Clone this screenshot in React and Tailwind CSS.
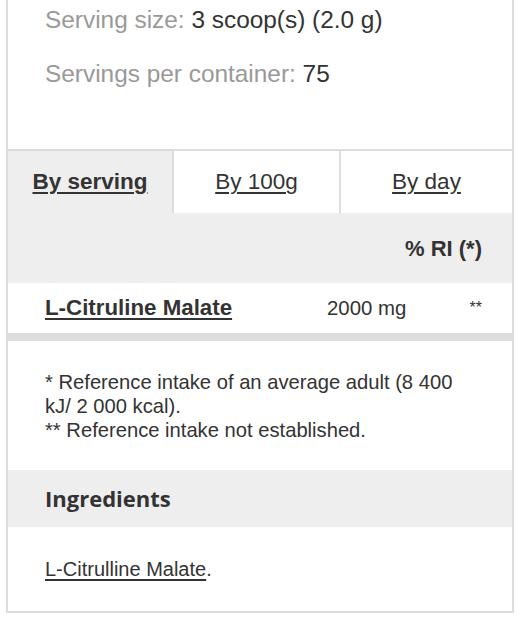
const TABS = [
  { label: "By serving", active: true, width: "w-[166px] border-r-2" },
  { label: "By 100g", active: false, width: "w-[167px] border-r-2" },
  { label: "By day", active: false, width: "flex-1" },
];

export default function App() {
  return (
    <div className="min-h-screen bg-white pl-[6px] font-['Liberation_Sans',Arial,sans-serif] text-[#333]">
      <div className="w-[508px] border-2 border-t-0 border-[#ddd]">
        {/* Serving info */}
        <div className="h-[151px] border-b-2 border-[#ddd] px-[37px] pt-[5px] text-[24.4px] leading-[30px]">
          <p>
            <span className="text-[#999]">Serving size:</span> 3 scoop(s) (2.0 g)
          </p>
          <p className="mt-[24px]">
            <span className="text-[#999]">Servings per container:</span> 75
          </p>
        </div>

        {/* Tabs */}
        <div className="flex h-[62px]">
          {TABS.map((tab) => (
            <div
              key={tab.label}
              className={`${tab.width} flex items-center justify-center border-[#ddd] text-[22.5px] ${
                tab.active ? "bg-[#eee] font-bold" : "bg-white"
              }`}
            >
              <span className="underline underline-offset-[3px]">{tab.label}</span>
            </div>
          ))}
        </div>

        {/* RI header */}
        <div className="flex h-[70px] items-center justify-end bg-[#eee] pr-[30px] text-[22px] font-bold">
          % RI (*)
        </div>

        {/* Row */}
        <div className="flex h-[58px] items-center border-b-8 border-[#ddd] pl-[37px] pr-[30px]">
          <span className="w-[282px] text-[22.3px] font-bold underline decoration-2 underline-offset-[3px]">
            L-Citruline Malate
          </span>
          <span className="flex-1 text-[20.4px]">2000 mg</span>
          <span className="text-[16px]">**</span>
        </div>

        {/* Footnotes */}
        <div className="h-[129px] px-[37px] pt-[29px] text-[20.2px] leading-[24px]">
          <p>* Reference intake of an average adult (8 400 kJ/ 2 000 kcal).</p>
          <p>** Reference intake not established.</p>
        </div>

        {/* Ingredients */}
        <div className="flex h-[57px] items-center bg-[#eee] px-[37px]">
          <h3 className="font-['Open_Sans',sans-serif] text-[22px] font-bold">Ingredients</h3>
        </div>
        <div className="flex h-[84px] items-center px-[37px] text-[20px]">
          <p>
            <span className="underline decoration-2 underline-offset-[3px]">L-Citrulline Malate</span>.
          </p>
        </div>
      </div>
    </div>
  );
}
